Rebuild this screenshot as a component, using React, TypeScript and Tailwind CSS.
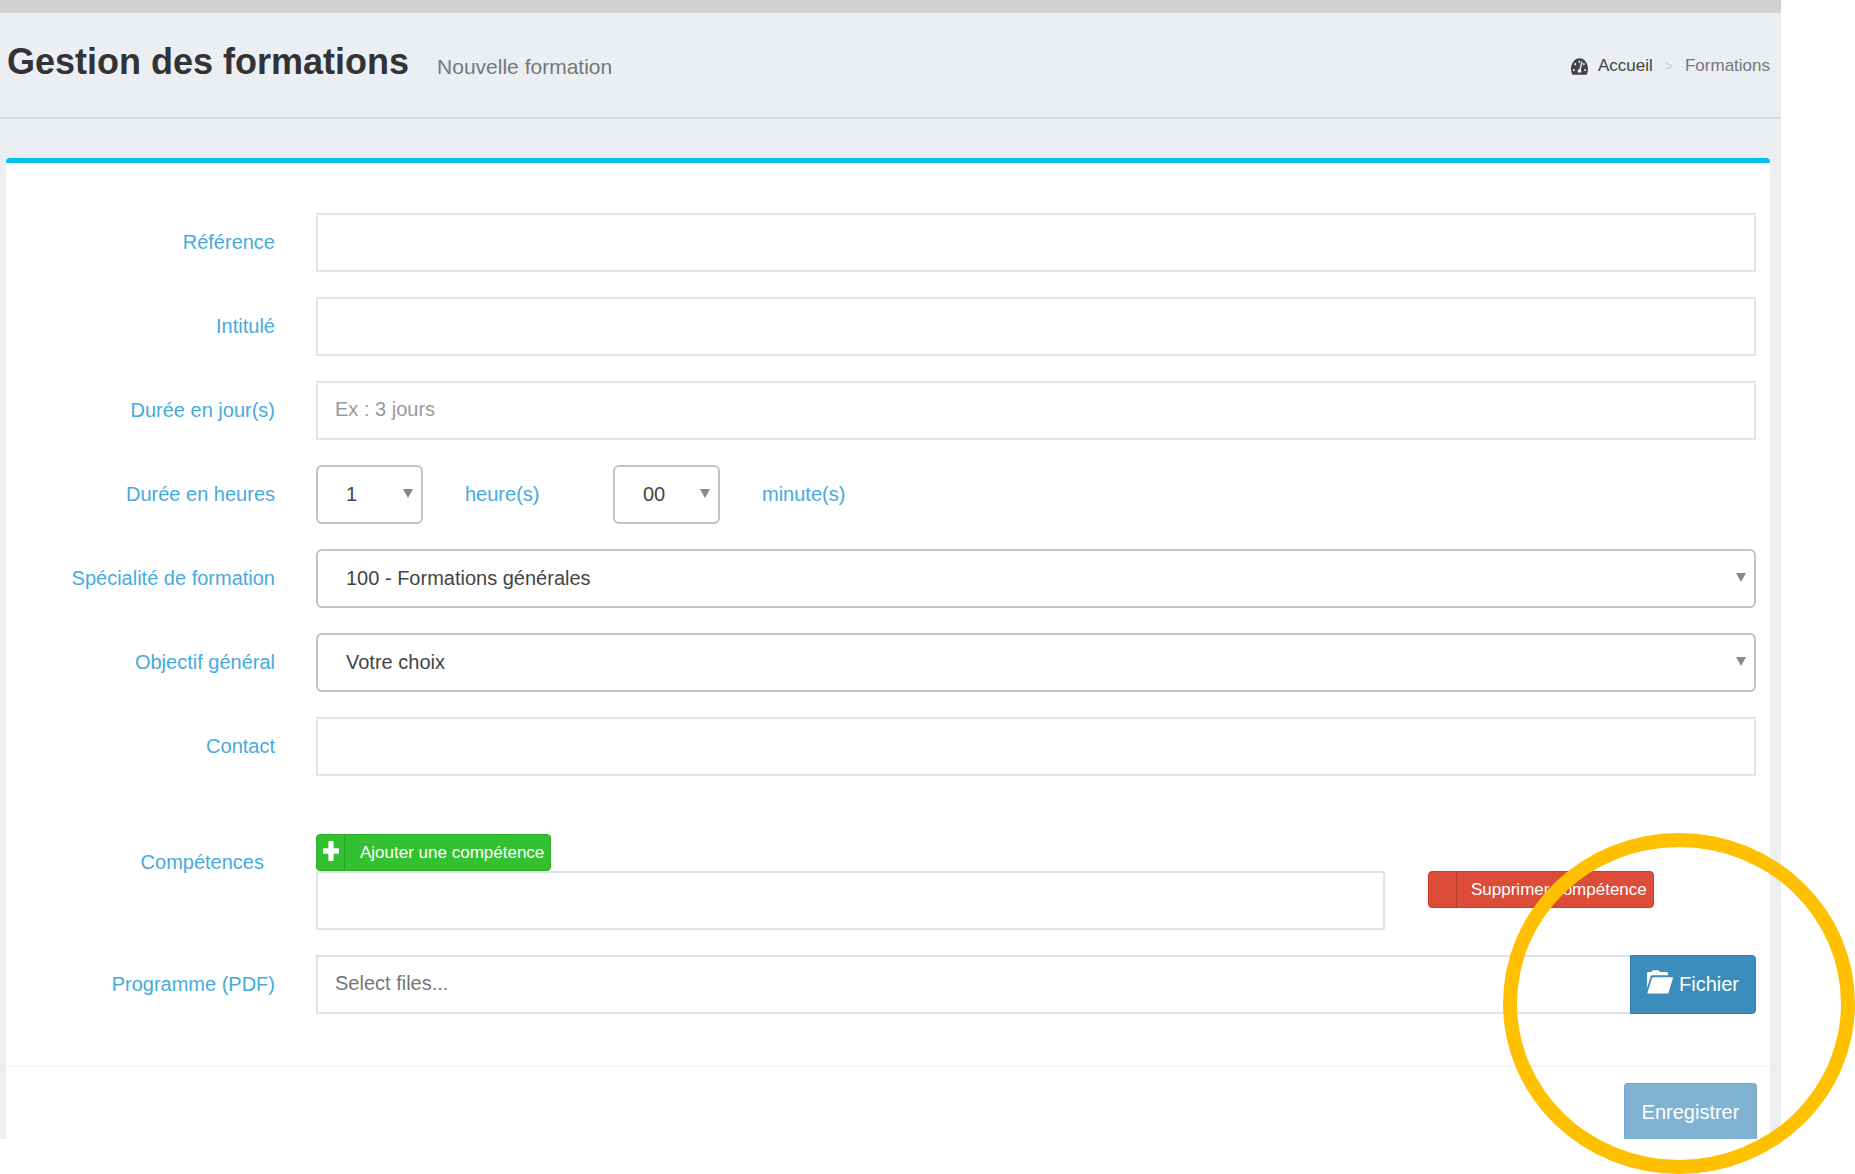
import React from "react";
import { FaTachometerAlt } from "react-icons/fa";

const fieldClass =
  "block w-full h-[59px] px-[17px] pb-[2px] bg-white border-2 border-[#e1e4ea] text-xl text-[#555] placeholder:text-[#999] outline-none focus:border-[#3c8dbc]";

type RowProps = {
  label: string;
  htmlFor: string;
  children: React.ReactNode;
};

function Row({ label, htmlFor, children }: RowProps) {
  return (
    <div className="grid grid-cols-[269px_1fr] gap-x-[41px] items-center">
      <label
        htmlFor={htmlFor}
        className="text-right pl-2 pb-[2px] text-xl whitespace-nowrap text-[#48aadc]"
      >
        {label}
      </label>
      {children}
    </div>
  );
}

type SelectProps = {
  id: string;
  options: string[];
  className?: string;
};

function Select({ id, options, className = "w-full" }: SelectProps) {
  return (
    <div className={`relative ${className}`}>
      <select
        id={id}
        className="appearance-none block w-full h-[59px] pl-7 pr-8 pb-[2px] bg-white border-2 border-[#c3c3c3] rounded-md text-xl text-[#444] outline-none"
      >
        {options.map((option) => (
          <option key={option}>{option}</option>
        ))}
      </select>
      <svg
        viewBox="0 0 10 9"
        className="absolute right-[10px] top-6 w-[10px] h-[9px] pointer-events-none"
      >
        <path d="M0 0h10L5 9z" fill="#888" />
      </svg>
    </div>
  );
}

function PlusIcon() {
  return (
    <svg viewBox="0 0 16 20" className="w-4 h-5">
      <path
        d="M6 0h4q.6 0 .6.8V7.300h4.800q.6 0 .6.700v4q0 .7-.6.700H10.600v6.500q0 .8-.6.8H6q-.6 0-.6-.8V12.700H.6Q0 12.700 0 12V8q0-.7.6-.7h4.800V.8Q5.400 0 6 0z"
        fill="#fff"
      />
    </svg>
  );
}

function FolderOpenIcon() {
  return (
    <svg viewBox="0 0 26 24" className="w-[26px] h-6">
      <path
        d="M0 18V3.500Q0 2 1.300 2H4.500l1.200-1.700h5.800L13 2h6.500Q21 2 21 3.600V5.200H5.200Q4 5.200 3.600 6.500z"
        fill="#fff"
      />
      <path
        d="M6.500 7.200h18.700q1 0 .7 1.100l-4.200 14q-.4 1.300-1.500 1.300H1q-.8 0-.5-1L5 8.300q.4-1.100 1.500-1.100z"
        fill="#fff"
      />
    </svg>
  );
}

export default function App() {
  return (
    <div className="relative overflow-hidden bg-white pb-[35px] font-['Liberation_Sans',Arial,sans-serif]">
      <div className="mr-[74px] bg-[#ebeff4] border-t-[13px] border-[#d1d1d1]">
        {/* Page header */}
        <header className="flex items-center justify-between h-[106px] pl-[7px] pr-[11px] pb-[6px] border-b-2 border-[#d9dce2]">
          <h1 className="flex items-baseline gap-7 text-4xl font-bold text-[#333]">
            Gestion des formations
            <small className="text-[21px] font-normal text-[#777]">
              Nouvelle formation
            </small>
          </h1>
          <nav className="flex items-center text-[17px] pt-2">
            <a href="#" className="flex items-center gap-[10px] text-[#444]">
              <FaTachometerAlt
                preserveAspectRatio="none"
                className="w-[17px] h-[19px]"
              />
              Accueil
            </a>
            <span className="px-3 text-sm text-[#ccc]">&gt;</span>
            <span className="text-[#777]">Formations</span>
          </nav>
        </header>

        {/* Form */}
        <form
          className="mt-[39px] ml-[6px] mr-[11px] bg-white border-t-[5px] border-[#00c0ef] rounded-t-[4px]"
          onSubmit={(e) => e.preventDefault()}
        >
          <div className="flex flex-col gap-[25px] pt-[50px] pr-[14px] pb-[51px]">
            <Row label="Référence" htmlFor="reference">
              <input id="reference" type="text" className={fieldClass} />
            </Row>
            <Row label="Intitulé" htmlFor="intitule">
              <input id="intitule" type="text" className={fieldClass} />
            </Row>
            <Row label="Durée en jour(s)" htmlFor="jours">
              <input
                id="jours"
                type="text"
                placeholder="Ex : 3 jours"
                className={fieldClass}
              />
            </Row>
            <Row label="Durée en heures" htmlFor="heures">
              <div className="flex items-center text-xl text-[#48aadc]">
                <Select
                  id="heures"
                  className="w-[107px]"
                  options={["1", "2", "3", "4", "5", "6", "7", "8"]}
                />
                <label
                  htmlFor="heures"
                  className="w-[190px] pl-[42px] pb-[2px]"
                >
                  heure(s)
                </label>
                <Select
                  id="minutes"
                  className="w-[107px]"
                  options={["00", "15", "30", "45"]}
                />
                <label htmlFor="minutes" className="pl-[42px] pb-[2px]">
                  minute(s)
                </label>
              </div>
            </Row>
            <Row label="Spécialité de formation" htmlFor="specialite">
              <Select
                id="specialite"
                options={["100 - Formations générales"]}
              />
            </Row>
            <Row label="Objectif général" htmlFor="objectif">
              <Select id="objectif" options={["Votre choix"]} />
            </Row>
            <Row label="Contact" htmlFor="contact">
              <input id="contact" type="text" className={fieldClass} />
            </Row>

            <div className="grid grid-cols-[258px_1fr] gap-x-[52px] mt-[33px]">
              <label
                htmlFor="competence"
                className="pt-[14px] text-right text-xl text-[#48aadc]"
              >
                Compétences
              </label>
              <div>
                <button
                  type="button"
                  className="flex items-stretch h-[37px] bg-[#34c131] border border-[#2bb128] rounded-[4px] text-[17px] text-white"
                >
                  <span className="flex items-center justify-center w-7 pb-1 border-r border-[#29a127]">
                    <PlusIcon />
                  </span>
                  <span className="self-center pl-[15px] pr-[6px]">
                    Ajouter une compétence
                  </span>
                </button>
                <div className="flex items-start">
                  <div className="flex-1">
                    <input id="competence" type="text" className={fieldClass} />
                  </div>
                  <div className="w-[371px] pl-[43px]">
                    <button
                      type="button"
                      className="flex items-stretch h-[37px] bg-[#dd4b39] border border-[#d73925] rounded-[4px] text-[17px] text-white"
                    >
                      <span className="w-7 border-r border-[#b03a2c]" />
                      <span className="self-center pl-[14px] pr-[6px]">
                        Supprimer compétence
                      </span>
                    </button>
                  </div>
                </div>
              </div>
            </div>

            <Row label="Programme (PDF)" htmlFor="programme">
              <div className="flex">
                <input
                  id="programme"
                  type="text"
                  readOnly
                  placeholder="Select files..."
                  className="flex-1 min-w-0 h-[59px] px-[17px] pb-[2px] bg-white border-2 border-r-0 border-[#dfe2e9] text-xl placeholder:text-[#777] outline-none"
                />
                <button
                  type="button"
                  className="flex items-center justify-center gap-[6px] w-[126px] h-[59px] pb-[2px] bg-[#3c8dbc] border border-[#367fa9] rounded-r-[4px] text-xl text-white"
                >
                  <span className="pb-1">
                    <FolderOpenIcon />
                  </span>
                  Fichier
                </button>
              </div>
            </Row>
          </div>

          <div className="flex justify-end pt-4 pr-[13px] border-t-2 border-[#f4f4f4]">
            <button
              type="submit"
              className="w-[133px] h-[56px] bg-[#80b2d2] border border-b-0 border-[#78a8c6] rounded-t-[4px] text-xl text-white"
            >
              Enregistrer
            </button>
          </div>
        </form>
      </div>

      {/* Highlight around the file and save buttons */}
      <div className="absolute right-0 bottom-0 w-[352px] h-[341px] border-[14px] border-[#ffc000] rounded-[50%] pointer-events-none" />
    </div>
  );
}
